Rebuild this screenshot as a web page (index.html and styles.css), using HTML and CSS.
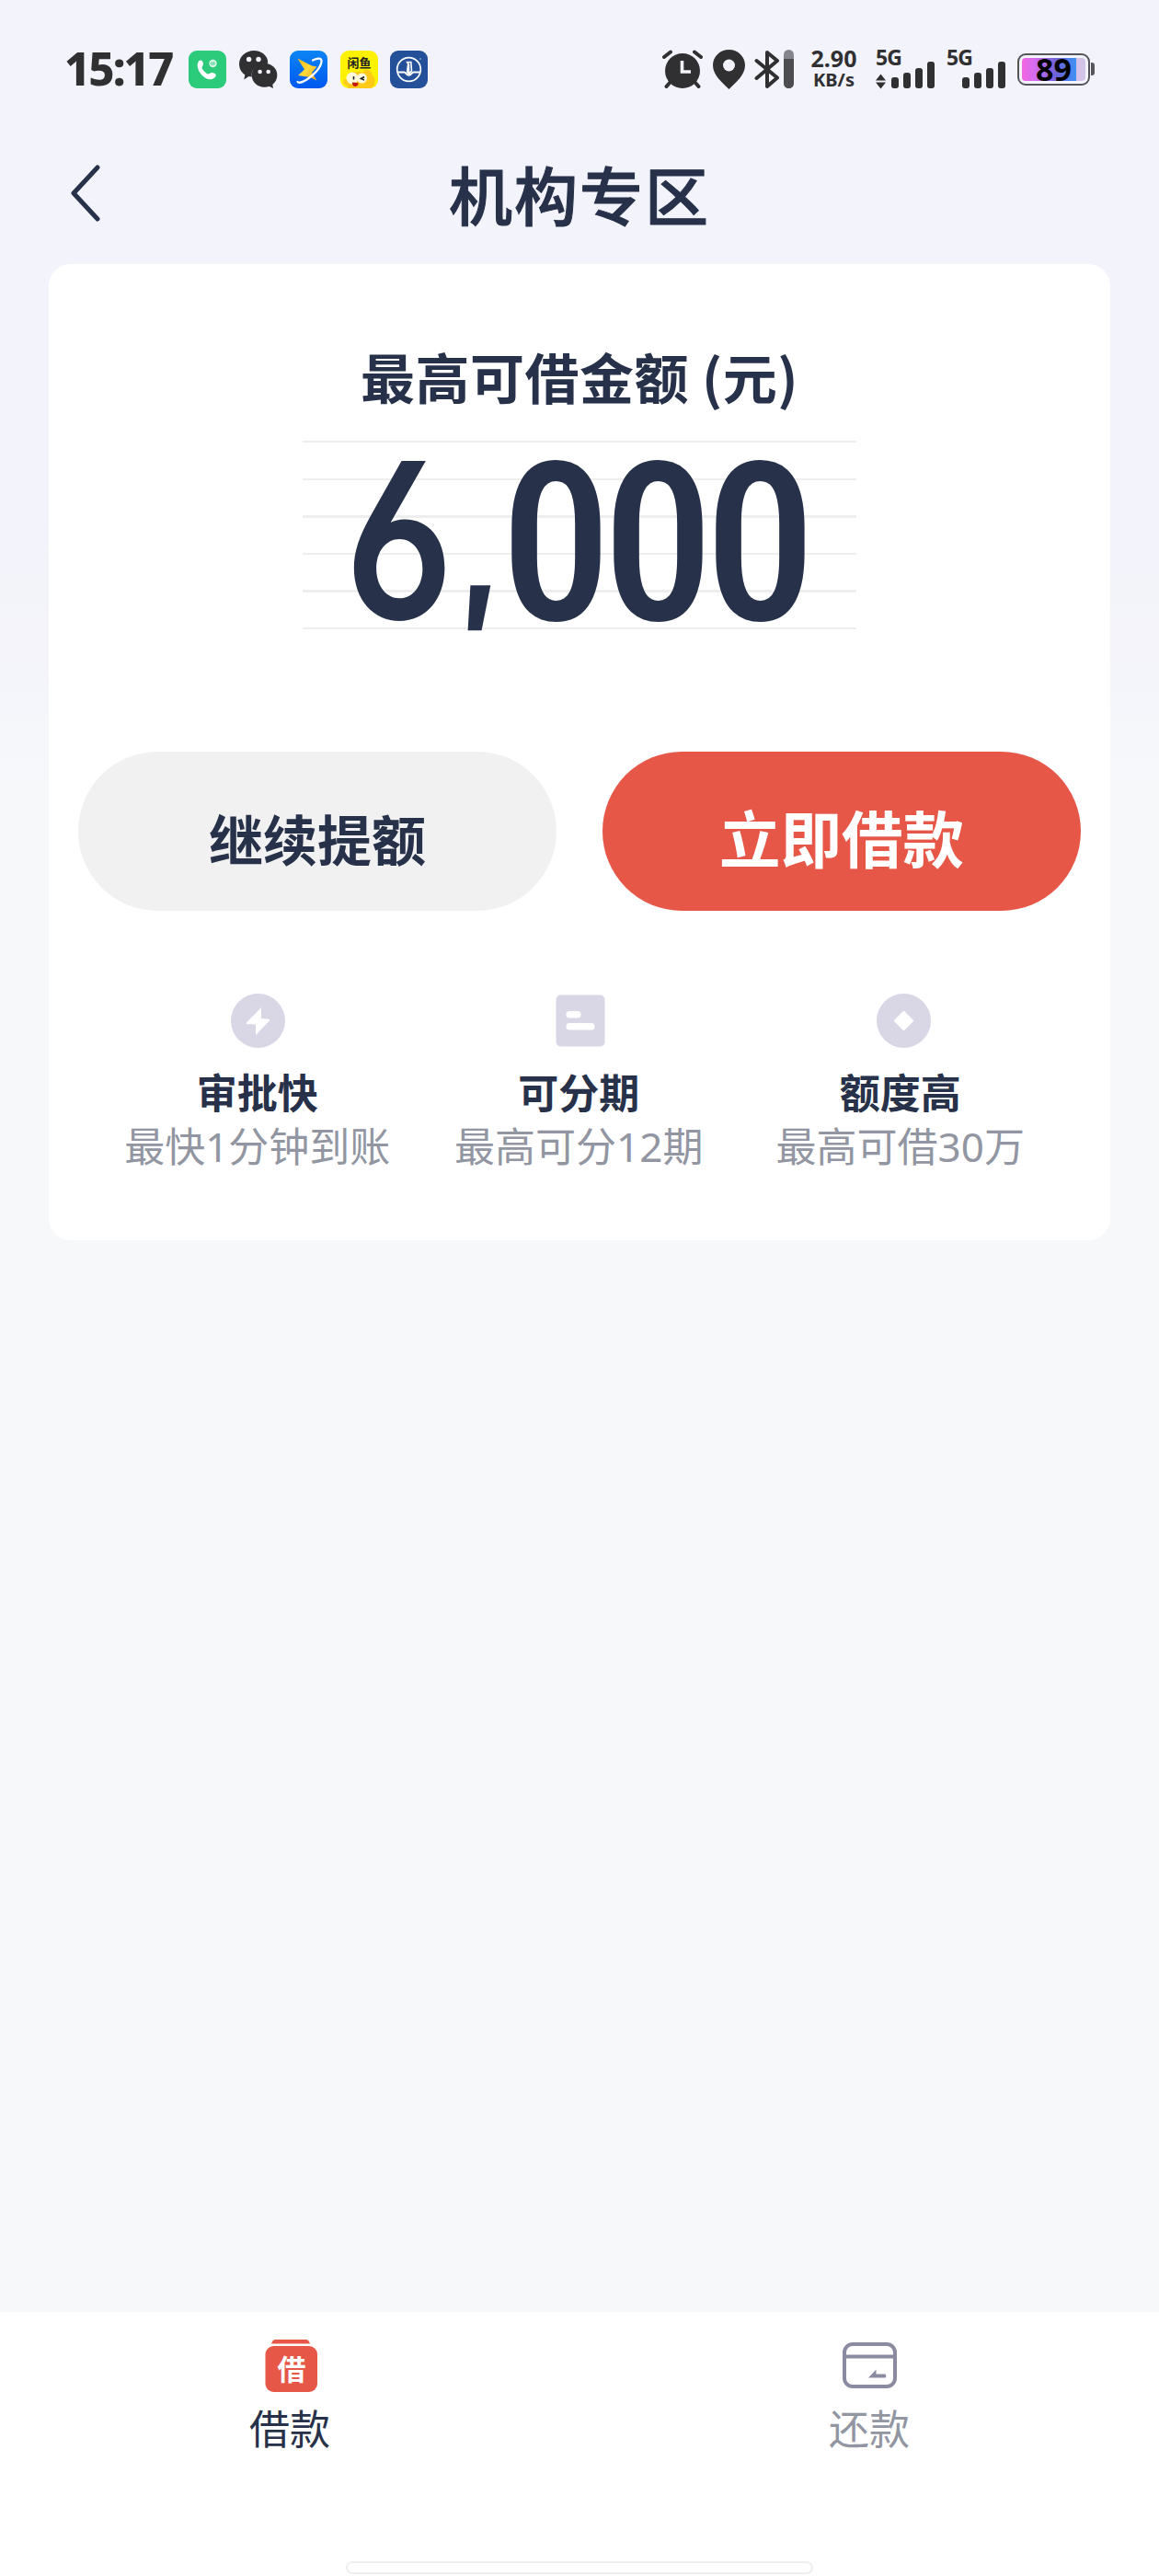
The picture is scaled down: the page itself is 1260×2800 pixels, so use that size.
FILE: index.html
```html
<!DOCTYPE html>
<html lang="zh-CN">
<head>
	<meta charset="UTF-8">
	<meta name="viewport" content="width=device-width, initial-scale=1.0">
	<title>机构专区</title>
	<link rel="stylesheet" href="styles.css">
</head>
<body>
<div class="page">

<!-- Status bar -->
<div class="status-bar">
	<span class="clock">15:17</span>
	<div class="app-icons">
		<svg width="41" height="41" viewBox="0 0 41 41">
			<rect width="41" height="41" rx="9" fill="#2bcb7b"/>
			<path d="M11 11.5c1.500-1.500 3.500-1.200 4.300.6.900 2 1 3.700-.4 5.300-.7.900-.4 1.700.2 2.700 1.400 2.300 2.700 3.600 4.800 4.800 1 .6 1.800.8 2.700.1 1.700-1.300 3.500-1.200 5.600-.2 1.800.8 2.200 2.700.7 4.100-2.800 2.700-6.700 3.100-10.200 1.100-3.900-2.200-6.700-5.500-8.200-9.700-1.200-3.300-1.300-6.400.5-8.800z" fill="#fff"/>
			<circle cx="26.500" cy="14" r="4.200" fill="#d8f6e6"/>
			<path d="M25 16l3-4M23.800 14.600l1.800-2.400M27.200 15.800l1.800-2.400" stroke="#2bcb7b" stroke-width="1"/>
		</svg>
		<svg width="42" height="41" viewBox="0 0 42 41">
			<path d="M16 0c8.600 0 15.200 5.700 15.200 12.800l-.1 1C22 14.500 13.600 19 13.600 26l.2 2.600-3.300-.6-5.200 3.400 1-5.200C2.400 23.400 0 19.300 0 14.400 0 6.500 7.200 0 16 0z" fill="#303033"/>
			<ellipse cx="27.500" cy="26.800" rx="13.800" ry="13" fill="#303033"/>
			<path d="M31 38l6 3-.9-5z" fill="#303033"/>
			<circle cx="10.600" cy="9.500" r="2.700" fill="#f2f3fb"/>
			<circle cx="21" cy="9.500" r="2.700" fill="#f2f3fb"/>
			<circle cx="22.600" cy="23" r="2.300" fill="#f2f3fb"/>
			<circle cx="31.700" cy="23" r="2.300" fill="#f2f3fb"/>
		</svg>
		<svg width="41" height="41" viewBox="0 0 41 41">
			<defs>
				<linearGradient id="app-blue" x1="0" y1="0" x2="0" y2="1"><stop offset="0" stop-color="#0b85f5"/><stop offset="1" stop-color="#0058ee"/></linearGradient>
				<linearGradient id="bolt" x1="0" y1="0" x2="1" y2="1"><stop offset="0" stop-color="#ffb81c"/><stop offset=".5" stop-color="#ffd83a"/><stop offset="1" stop-color="#f9a01b"/></linearGradient>
			</defs>
			<rect width="41" height="41" rx="9" fill="url(#app-blue)"/>
			<path d="M8.500 8.500l15.500 8 5.500 1-5.500 6.500 5.500 8.500-7-3.500-13.500-2 7-6.500z" fill="url(#bolt)"/>
			<path d="M25 10.500c6-2.800 10-2.500 9.500 1.500-.7 6.500-8 14.500-16 19.500-4.500 2.800-9 4-10 2.500" fill="none" stroke="#fff" stroke-width="2.200" stroke-linecap="round"/>
		</svg>
		<svg width="41" height="41" viewBox="0 0 41 41">
			<rect width="41" height="41" rx="9" fill="#fff200"/>
			<path d="M9 41c-2-5-6-3-5.500-8 .3-3 2-2 3.500-1 1-6 5-9 10-9 3 0 5 0 7 1 1-3 4-4 6-3 3 1 4 3 4 5 2 1 3.500 4 3.500 7 0 4-1.500 7-4.500 8z" fill="#ffc918"/>
			<circle cx="13" cy="30" r="6.500" fill="#fff9dc"/>
			<circle cx="23.500" cy="30" r="5.500" fill="#fff9dc"/>
			<path d="M14.500 28v3.500M26 28.500l-3.500 2 3.500 1.500" stroke="#222" stroke-width="1.600" fill="none"/>
			<path d="M13 34.500l6.500.5c0 3-1.500 4-3.500 4s-3.200-2-3-4.500z" fill="#c2160d"/>
			<text x="20.500" y="17.800" class="app-label">闲鱼</text>
		</svg>
		<svg width="41" height="41" viewBox="0 0 41 41">
			<rect width="41" height="41" rx="9" fill="#24509a"/>
			<circle cx="20.500" cy="20.500" r="12.800" fill="none" stroke="#fff" stroke-width="1.700"/>
			<path d="M18.600 12.500h4.200l.7 9.500-3 3.500v-10zM20 12.500l-1.400 10.500c1 1.500 1.800 2 3.200 2.300" fill="none" stroke="#fff" stroke-width="1.600"/>
			<path d="M8.500 23.500h7c1.500 0 2.500 3.200 5 3.200s3.500-3.200 5-3.200h7" fill="none" stroke="#fff" stroke-width="2"/>
			<circle cx="33" cy="9" r=".8" fill="#c9d5ea"/>
		</svg>
	</div>

	<div class="system-icons">
		<svg class="alarm" width="44" height="42" viewBox="0 0 44 42">
			<circle cx="22" cy="23" r="19" fill="#303033"/>
			<path d="M2 8l7-5.500M42 8l-7-5.500" stroke="#303033" stroke-width="4" stroke-linecap="round"/>
			<path d="M8 36l-3.500 4M36 36l3.500 4" stroke="#303033" stroke-width="4" stroke-linecap="round"/>
			<path d="M21.500 12v12H31" fill="none" stroke="#f2f3fb" stroke-width="3.600"/>
		</svg>
		<svg class="pin" width="35" height="43" viewBox="0 0 35 43">
			<path d="M17.500 0C7.800 0 0 7.500 0 17c0 10.500 9.500 18 17.500 26C25.500 35 35 27.500 35 17 35 7.500 27.200 0 17.500 0z" fill="#303033"/>
			<circle cx="17.500" cy="17" r="6.500" fill="#f2f3fb"/>
		</svg>
		<svg class="bluetooth" width="43" height="43" viewBox="0 0 43 43">
			<path d="M2.500 12L25 30.500l-11 9.500V3l11 9L2.500 31" fill="none" stroke="#303033" stroke-width="4" stroke-linejoin="round" stroke-linecap="round"/>
			<rect x="32" y="0" width="11" height="42" rx="5.500" fill="#85868d"/>
			<path d="M32 10h11v26.500a5.500 5.500 0 0 1-11 0z" fill="#4d4d51"/>
		</svg>
		<div class="net-speed">
			<span class="net-value">2.90</span>
			<span class="net-unit">KB/s</span>
		</div>
		<div class="signal">
			<span class="signal-type">5G</span>
			<svg width="64" height="30" viewBox="0 0 64 30">
				<path d="M0 20.500l5.500-7 5.500 7zM0 22.500l5.500 7 5.500-7z" fill="#303033"/>
				<rect x="17" y="17" width="8" height="12" rx="3" fill="#303033"/>
				<rect x="30" y="12" width="8" height="17" rx="3" fill="#303033"/>
				<rect x="43" y="7" width="8" height="22" rx="3" fill="#303033"/>
				<rect x="56" y="0" width="8" height="29" rx="3" fill="#303033"/>
			</svg>
		</div>
		<div class="signal">
			<span class="signal-type">5G</span>
			<svg width="64" height="30" viewBox="0 0 64 30">
				<rect x="17" y="17" width="8" height="12" rx="3" fill="#303033"/>
				<rect x="30" y="12" width="8" height="17" rx="3" fill="#303033"/>
				<rect x="43" y="7" width="8" height="22" rx="3" fill="#303033"/>
				<rect x="56" y="0" width="8" height="29" rx="3" fill="#303033"/>
			</svg>
		</div>
		<div class="battery">
			<div class="battery-body"><div class="battery-level">89</div></div>
			<div class="battery-nub"></div>
		</div>
	</div>
</div>

<!-- Title bar -->
<header class="header">
	<svg class="back" width="34" height="64" viewBox="0 0 34 64">
		<path d="M31 4L5 32l26 28" fill="none" stroke="#273149" stroke-width="5" stroke-linecap="round" stroke-linejoin="round"/>
	</svg>
	<h1 class="title">机构专区</h1>
</header>

<!-- Credit card -->
<main class="card">
	<h2 class="card-label">最高可借金额 (元)</h2>
	<div class="amount"><span class="six">6</span><span class="comma">,</span><span class="zeros">000</span></div>

	<div class="buttons">
		<button class="btn btn-grey">继续提额</button>
		<button class="btn btn-red">立即借款</button>
	</div>

	<div class="features">
		<div class="feature">
			<svg width="60" height="60" viewBox="0 0 60 60">
				<circle cx="30.500" cy="29.500" r="29.500" fill="#d9d6e6"/>
				<path d="M34 15L18 31.500q-1 1.500.8 1.600l9.200.3V45L43 29.500q1-1.500-1-1.700l-8-.8z" fill="#fff"/>
			</svg>
			<h3 class="feature-title">审批快</h3>
			<p class="feature-text">最快1分钟到账</p>
		</div>
		<div class="feature">
			<svg width="60" height="60" viewBox="0 0 60 60">
				<rect x="5.500" y="1.500" width="53" height="56" rx="5" fill="#d9d6e6"/>
				<rect x="16.500" y="19" width="16" height="7.500" rx="3.500" fill="#fff"/>
				<rect x="16.500" y="32" width="31" height="7.500" rx="3.500" fill="#fff"/>
			</svg>
			<h3 class="feature-title">可分期</h3>
			<p class="feature-text">最高可分12期</p>
		</div>
		<div class="feature">
			<svg width="66" height="60" viewBox="0 0 66 60">
				<circle cx="36.500" cy="29.500" r="29.500" fill="#d9d6e6"/>
				<path d="M36.500 19.500l10 10-10 10-10-10z" fill="#fff" stroke="#fff" stroke-width="1.500" stroke-linejoin="round"/>
			</svg>
			<h3 class="feature-title">额度高</h3>
			<p class="feature-text">最高可借30万</p>
		</div>
	</div>
</main>

<!-- Bottom tabs -->
<nav class="tab-bar">
	<div class="tabs">
		<a class="tab active">
			<svg width="60" height="60" viewBox="0 0 60 60">
				<path d="M14 1h34q2.500 0 4 4.500H10q1.500-4.500 4-4.500z" fill="#e65748"/>
				<rect x="3.500" y="8" width="56.500" height="50" rx="9" fill="#e65748"/>
				<text x="32" y="45" class="tab-glyph">借</text>
			</svg>
			<span>借款</span>
		</a>
		<a class="tab">
			<svg width="60" height="60" viewBox="0 0 60 60">
				<rect x="3" y="6" width="55" height="46" rx="9" fill="none" stroke="#8a8ba1" stroke-width="4"/>
				<path d="M3 19.500h56" stroke="#8a8ba1" stroke-width="4"/>
				<path d="M29 42.500l8.500-9v5h10q1.500 2 0 4z" fill="#8a8ba1"/>
			</svg>
			<span>还款</span>
		</a>
	</div>
	<div class="home-indicator"></div>
</nav>

</div>
</body>
</html>
```
FILE: styles.css
```css
	body {
		margin: 0;
		font-family: "Noto Sans CJK SC", sans-serif;
		color: #273149;
		background: #f6f8fa;
		}

	h1, h2, h3, p {
		margin: 0;
		}

	svg {
		display: block;
		flex: none;
		}

	.page {
		display: flex;
		flex-direction: column;
		width: 1260px;
		height: 2800px;
		background: linear-gradient(#f2f3fb 0, #f2f3fb 540px, #f4f4fa 700px, #f5f7fb 800px, #f6f8fa 860px);
		}

	/* Status bar */
	.status-bar {
		display: flex;
		align-items: center;
		height: 150px;
		padding: 0 70px 0 70px;
		color: #303033;
		font-family: "Noto Sans", sans-serif;
		}

	.clock {
		width: 135px;
		margin-bottom: 2px;
		font-size: 49px;
		line-height: 48px;
		font-weight: 800;
		letter-spacing: -2px;
		white-space: nowrap;
		}

	.app-icons {
		display: flex;
		gap: 13.600px;
		}

	.app-label {
		font: bold 13px "Noto Sans CJK SC", sans-serif;
		fill: #222;
		text-anchor: middle;
		}

	.system-icons {
		display: flex;
		align-items: center;
		margin-left: auto;
		}

	.pin {
		margin-left: 11px;
		}

	.bluetooth {
		margin-left: 10px;
		}

	.net-speed {
		display: flex;
		flex-direction: column;
		align-items: center;
		width: 53px;
		margin-left: 17px;
		font-weight: 700;
		}

	.net-value {
		font-size: 25px;
		line-height: 24px;
		}

	.net-unit {
		font-size: 20px;
		line-height: 24px;
		}

	.signal {
		display: flex;
		flex-direction: column;
		width: 64px;
		margin-left: 19px;
		}

	.signal + .signal {
		margin-left: 13px;
		}

	.signal-type {
		font-size: 23px;
		line-height: 16px;
		height: 13px;
		font-weight: 700;
		letter-spacing: -1px;
		}

	.battery {
		display: flex;
		align-items: center;
		margin-left: 13px;
		}

	.battery-body {
		width: 69px;
		height: 25px;
		padding: 3px;
		border: 2px solid #55555b;
		border-radius: 9px;
		}

	.battery-level {
		width: 69px;
		height: 25px;
		border-radius: 4px;
		background: linear-gradient(90deg, #f266e0 0, #d56cf0 20%, #6a62d8 55%, #3f8ff5 85%, #d3c3e8 85%);
		color: #000;
		font-size: 34px;
		font-weight: 700;
		line-height: 24px;
		text-align: center;
		}

	.battery-nub {
		width: 4px;
		height: 14px;
		margin-left: 1px;
		border-radius: 0 3px 3px 0;
		background: #55555b;
		}

	/* Title bar */
	.header {
		display: flex;
		align-items: center;
		height: 119px;
		margin-bottom: 18px;
		padding: 0 75px;
		}

	.title {
		flex: 1;
		margin-right: 34px;
		text-align: center;
		font-size: 69px;
		font-weight: 500;
		line-height: 80px;
		letter-spacing: 2px;
		-webkit-text-stroke: 1px #273149;
		}

	/* White card */
	.card {
		box-sizing: border-box;
		width: 1154px;
		height: 1061px;
		margin: 0 53px;
		padding: 92px 32px 0;
		border-radius: 24px;
		background: #fff;
		}

	.card-label {
		text-align: center;
		font-size: 59px;
		font-weight: 700;
		line-height: 60px;
		letter-spacing: 0.5px;
		}

	/* Ruled lines behind the number */
	.amount {
		display: flex;
		width: 602px;
		height: 206px;
		margin: 40px auto 132px;
		background: repeating-linear-gradient(#eee 0, #eee 2.500px, transparent 2.500px, transparent 40.600px);
		font-size: 242px;
		line-height: 224px;
		}

	.six {
		width: 118px;
		margin-left: 46px;
		font-family: Inter, sans-serif;
		font-size: 236px;
		font-weight: 600;
		line-height: 217px;
		font-feature-settings: "cv03";
		transform: scaleX(0.83);
		transform-origin: 0 0;
		}

	.comma {
		width: 43px;
		margin-left: 8px;
		font-family: Inter, sans-serif;
		font-size: 156px;
		font-weight: 800;
		line-height: 238px;
		transform: scaleX(0.85) skewX(4deg);
		transform-origin: 0 100%;
		}

	.zeros {
		font-family: "Roboto Condensed", Roboto, sans-serif;
		font-weight: 500;
		letter-spacing: -10px;
		}

	.buttons {
		display: flex;
		justify-content: space-between;
		}

	.btn {
		width: 520px;
		height: 173px;
		padding: 13px 0 0;
		border: none;
		border-radius: 87px;
		font-family: inherit;
		font-weight: 700;
		}

	.btn-grey {
		background: #f1f1f1;
		color: #273149;
		font-size: 59px;
		}

	.btn-red {
		padding-top: 11px;
		background: #e65748;
		color: #fff;
		font-size: 66.500px;
		}

	.features {
		display: grid;
		grid-template-columns: repeat(3, 349.500px);
		margin: 90px 0 0 20px;
		}

	.feature {
		display: flex;
		flex-direction: column;
		align-items: center;
		}

	.feature-title {
		margin-top: 18px;
		font-size: 44px;
		font-weight: 700;
		line-height: 56px;
		}

	/* Latin digits come from Noto Sans, the rest falls to the CJK face */
	.feature-text {
		margin-top: 2px;
		color: #9196a2;
		font-family: "Noto Sans", "Noto Sans CJK SC", sans-serif;
		font-size: 44px;
		line-height: 60px;
		}

	/* Bottom tabs */
	.tab-bar {
		display: flex;
		flex-direction: column;
		align-items: center;
		box-sizing: border-box;
		height: 287px;
		margin-top: auto;
		padding-top: 29px;
		background: #fff;
		}

	.tabs {
		display: flex;
		width: 100%;
		}

	.tab {
		display: flex;
		flex: 1;
		flex-direction: column;
		align-items: center;
		gap: 11px;
		color: #9196a2;
		font-size: 44px;
		line-height: 50px;
		}

	.tab.active {
		color: #273149;
		}

	.tab-glyph {
		font-size: 31px;
		font-weight: 700;
		fill: #fff;
		text-anchor: middle;
		}

	.home-indicator {
		box-sizing: border-box;
		width: 508px;
		height: 14px;
		margin-top: auto;
		margin-bottom: 2px;
		border: 2px solid #efefef;
		border-radius: 7px;
		}
```
